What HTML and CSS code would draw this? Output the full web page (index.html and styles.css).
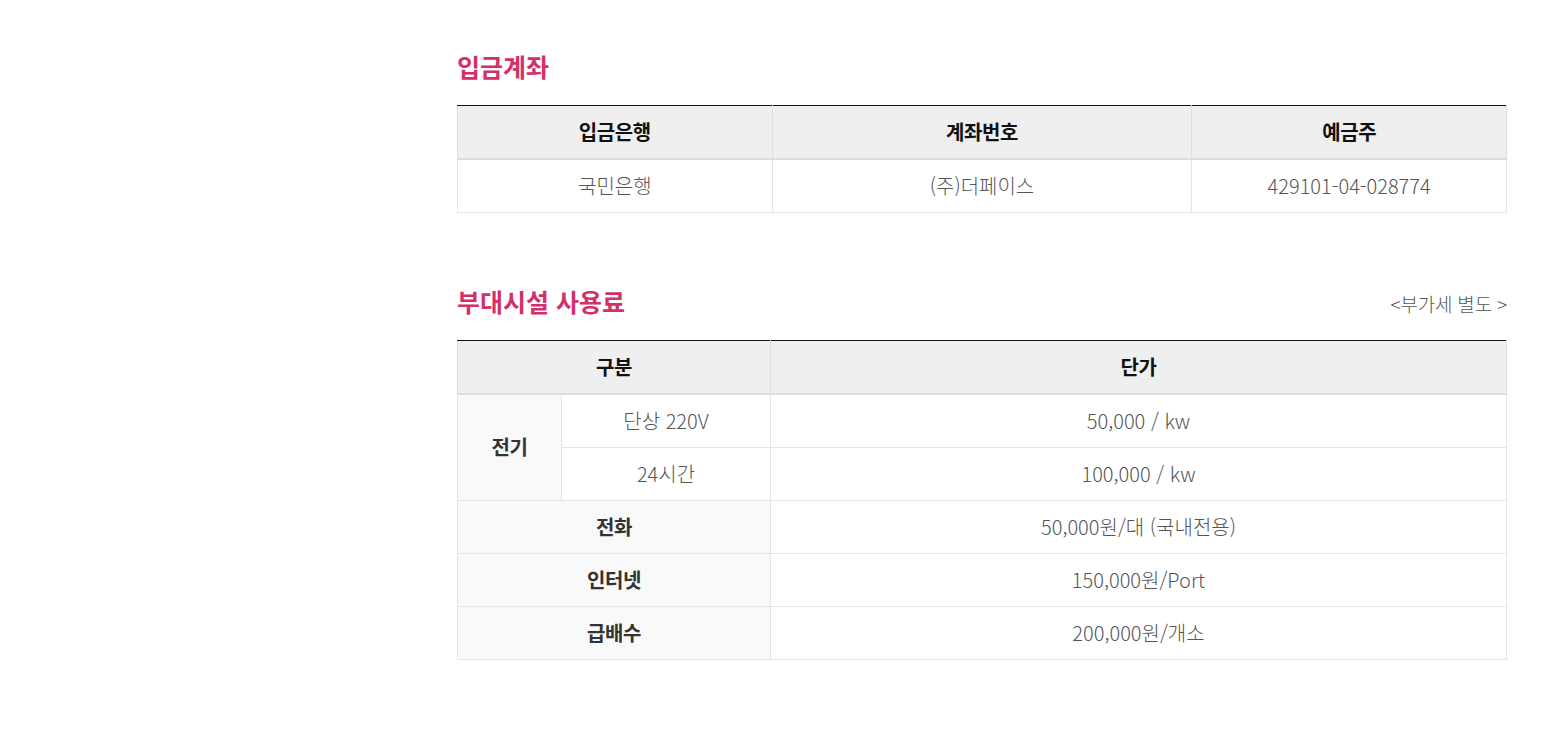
FILE: index.html
```html
<!DOCTYPE html>
<html lang="ko">
<head>
<meta charset="utf-8">
<link rel="stylesheet" href="styles.css">
</head>
<body>
<div class="page">
  <div class="sidebar"></div>
  <main class="content">
    <section class="section">
      <div class="sec-head">
        <h2 class="sec-title">입금계좌</h2>
      </div>
      <table class="tbl tbl-account">
        <colgroup><col class="c30"><col class="c40"><col class="c30"></colgroup>
        <thead>
          <tr><th>입금은행</th><th>계좌번호</th><th>예금주</th></tr>
        </thead>
        <tbody>
          <tr><td>국민은행</td><td>(주)더페이스</td><td>429101-04-028774</td></tr>
        </tbody>
      </table>
    </section>

    <section class="section section-2">
      <div class="sec-head">
        <h2 class="sec-title">부대시설 사용료</h2>
        <span class="sec-note">&lt;부가세 별도 &gt;</span>
      </div>
      <table class="tbl tbl-fee">
        <colgroup><col class="ca"><col class="cb"><col class="cc"></colgroup>
        <thead>
          <tr><th colspan="2">구분</th><th>단가</th></tr>
        </thead>
        <tbody>
          <tr><td rowspan="2" class="lbl">전기</td><td>단상 220V</td><td>50,000 / kw</td></tr>
          <tr><td>24시간</td><td>100,000 / kw</td></tr>
          <tr><td colspan="2" class="lbl">전화</td><td>50,000원/대 (국내전용)</td></tr>
          <tr><td colspan="2" class="lbl">인터넷</td><td>150,000원/Port</td></tr>
          <tr><td colspan="2" class="lbl">급배수</td><td>200,000원/개소</td></tr>
        </tbody>
      </table>
    </section>
  </main>
</div>
</body>
</html>
```

FILE: styles.css
```css
* { box-sizing: border-box; }
html, body { margin: 0; padding: 0; background: #fff; }
body {
  font-family: "Noto Sans CJK KR", "Noto Sans", sans-serif;
  color: #555;
}
.page {
  display: flex;
  padding-top: 46px;
}
.sidebar { width: 457px; flex: none; }
.content { width: 1050px; flex: none; }

.sec-head {
  display: flex;
  justify-content: space-between;
  align-items: flex-start;
  height: 59px;
}
.sec-title {
  margin: 0;
  font-size: 25px;
  font-weight: 700;
  line-height: 40px;
  color: #d3306a;
}
.sec-note {
  font-size: 19px;
  color: #555;
  line-height: 40px;
  margin-top: 3px;
  font-weight: 300;
  letter-spacing: -0.2px;
}
.section-2 { margin-top: 68px; }

.tbl {
  width: 100%;
  border-collapse: collapse;
  table-layout: fixed;
  border-top: 1px solid #111;
  font-size: 20px;
}
.c30 { width: 30%; }
.c40 { width: 40%; }
.ca { width: 104px; }
.cb { width: 209px; }
.cc { width: auto; }

.tbl th, .tbl td {
  height: 53px;
  padding: 0 10px;
  text-align: center;
  vertical-align: middle;
  border: 1px solid #e5e5e5;
  line-height: 26px;
}
.tbl tbody tr:first-child td { height: 54px; }
.tbl th {
  background: #efefef;
  color: #111;
  font-weight: 700;
  letter-spacing: -0.4px;
  border-bottom: 2px solid #dcdcdc;
  border-left-color: #dedede;
  border-right-color: #dedede;
  border-top: 1px solid #111;
}
.tbl td {
  color: #555;
  font-weight: 300;
}
.tbl td.lbl {
  background: #f9f9f9;
  color: #333;
  font-weight: 700;
  letter-spacing: -0.4px;
}
```
